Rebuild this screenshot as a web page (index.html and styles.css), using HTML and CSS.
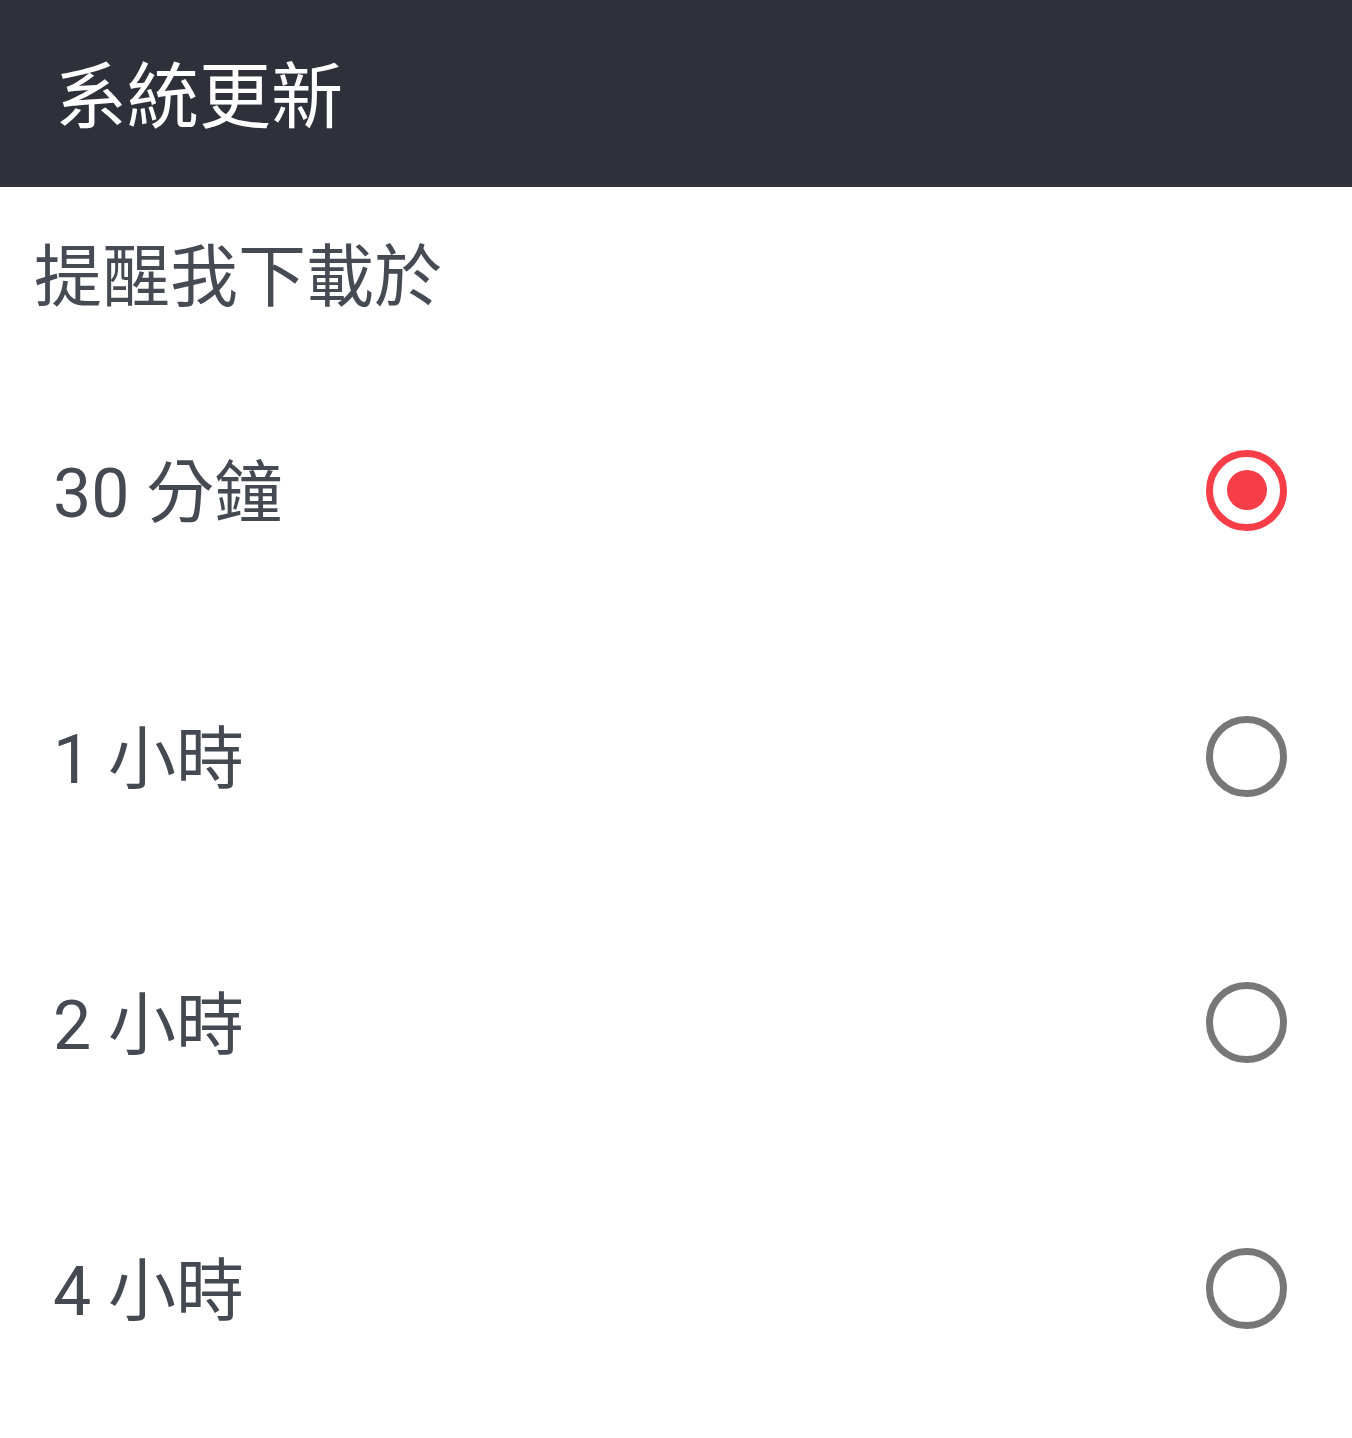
FILE: index.html
```html
<!DOCTYPE html>
<html lang="zh-Hant">
<head>
    <meta charset="UTF-8">
    <meta name="viewport" content="width=device-width, initial-scale=1.0">
    <title>系統更新</title>
    <link rel="stylesheet" href="styles.css">
</head>
<body>
    <div class="dialog">
        <div class="dialog-header">
            <h1>系統更新</h1>
        </div>

        <p class="dialog-subtitle">提醒我下載於</p>

        <ul class="option-list">
            <li class="option selected">
                <span class="option-label">30 分鐘</span>
                <span class="radio"></span>
            </li>
            <li class="option">
                <span class="option-label">1 小時</span>
                <span class="radio"></span>
            </li>
            <li class="option">
                <span class="option-label">2 小時</span>
                <span class="radio"></span>
            </li>
            <li class="option">
                <span class="option-label">4 小時</span>
                <span class="radio"></span>
            </li>
        </ul>
    </div>
</body>
</html>
```

FILE: styles.css
```css
* {
    margin: 0;
    padding: 0;
    box-sizing: border-box;
}

body {
    font-family: Roboto, "Noto Sans CJK TC", sans-serif;
    background: #ffffff;
    min-height: 100vh;
}

.dialog {
    background: white;
    width: 100%;
}

.dialog-header {
    background: #2e313a;
    height: 187px;
    display: flex;
    align-items: center;
    padding-left: 55px;
}

.dialog-header h1 {
    color: #ffffff;
    font-size: 72px;
    font-weight: 400;
    line-height: 1.2;
    padding-top: 9px;
}

.dialog-subtitle {
    color: #464b53;
    font-size: 68px;
    line-height: 82px;
    padding: 50px 0 38px 34px;
}

.option-list {
    list-style: none;
}

.option {
    height: 266px;
    display: flex;
    align-items: center;
    justify-content: space-between;
    padding: 0 65px 0 53px;
}

.option-label {
    color: #454a52;
    font-size: 68px;
    line-height: 82px;
    padding-top: 8px;
}

.radio {
    width: 81px;
    height: 81px;
    border: 7px solid #777777;
    border-radius: 50%;
    display: flex;
    align-items: center;
    justify-content: center;
}

.option.selected .radio {
    border-color: #f73d48;
}

.option.selected .radio::after {
    content: "";
    width: 40px;
    height: 40px;
    border-radius: 50%;
    background: #f73d48;
}
```
